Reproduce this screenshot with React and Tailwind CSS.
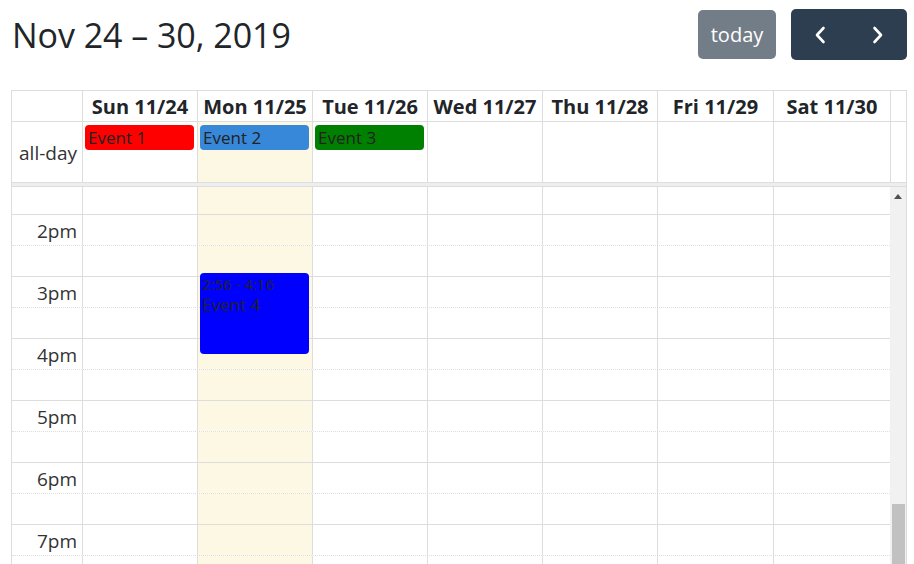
import React from 'react'

const DAYS = ['Sun 11/24', 'Mon 11/25', 'Tue 11/26', 'Wed 11/27', 'Thu 11/28', 'Fri 11/29', 'Sat 11/30']
const COLS = 'grid grid-cols-[70px_115px_115px_115px_115px_115px_116px_117px_16px]'
const BODY_COLS = 'grid grid-cols-[70px_115px_115px_115px_115px_115px_116px_117px]'

const SLOTS = [
  { label: '', hour: false },
  { label: '2pm', hour: true },
  { label: '', hour: false },
  { label: '3pm', hour: true },
  { label: '', hour: false },
  { label: '4pm', hour: true },
  { label: '', hour: false },
  { label: '5pm', hour: true },
  { label: '', hour: false },
  { label: '6pm', hour: true },
  { label: '', hour: false },
  { label: '7pm', hour: true },
  { label: '', hour: false },
]

const ALLDAY = [
  { day: 0, title: 'Event 1', color: 'bg-[#ff0000]' },
  { day: 1, title: 'Event 2', color: 'bg-[#3788d8]' },
  { day: 2, title: 'Event 3', color: 'bg-[#008000]' },
]

function Chevron({ dir }) {
  return (
    <svg width="14" height="20" viewBox="0 0 14 20" fill="none">
      <path
        d={dir === 'left' ? 'M10.5 3 L4 10 L10.5 17' : 'M3.5 3 L10 10 L3.5 17'}
        stroke="white"
        strokeWidth="2.6"
        strokeLinecap="round"
        strokeLinejoin="round"
      />
    </svg>
  )
}

export default function App() {
  return (
    <div className="h-screen overflow-hidden bg-white text-[#212529] font-['Open_Sans','Noto_Sans',sans-serif] flex flex-col">
      {/* toolbar */}
      <div className="flex items-center justify-between pl-[12px] pr-[7px] pt-[9px] mb-[30px]">
        <h2 className="text-[34px] leading-[51px] h-[51px] tracking-[-0.05px] pt-[1px]">Nov 24 – 30, 2019</h2>
        <div className="flex items-center gap-[15px]">
          <button className="w-[78px] h-[49px] rounded-[5px] bg-[#737d88] text-white text-[20px] leading-none">today</button>
          <div className="flex h-[51px] rounded-[5px] bg-[#2c3e50] overflow-hidden">
            <button className="w-[58px] flex items-center justify-center">
              <Chevron dir="left" />
            </button>
            <button className="w-[58px] flex items-center justify-center">
              <Chevron dir="right" />
            </button>
          </div>
        </div>
      </div>

      {/* calendar */}
      <div className="ml-[11px] w-[896px] border border-b-0 border-[#ddd] flex-1 flex flex-col min-h-0">
        {/* day header */}
        <div className={`${COLS} h-[31px] border-b border-[#ddd]`}>
          <div />
          {DAYS.map((d) => (
            <div key={d} className="border-l border-[#ddd] flex items-center justify-center font-bold text-[20px] pt-[1px]">
              {d}
            </div>
          ))}
          <div className="border-l border-[#ddd]" />
        </div>

        {/* all-day row */}
        <div className={`${COLS} h-[60px]`}>
          <div className="flex items-center justify-end pr-[5px] text-[19px] pt-[3px] text-[#333]">all-day</div>
          {DAYS.map((d, i) => {
            const ev = ALLDAY.find((e) => e.day === i)
            return (
              <div key={d} className={`border-l border-[#ddd] pt-[3px] pl-[2px] pr-[3px] ${i === 1 ? 'bg-[#fcf8e3]' : ''}`}>
                {ev && (
                  <div className={`${ev.color} h-[25px] rounded-[4px] pl-[3px] text-[17px] leading-[25px] text-[#222]`}>
                    {ev.title}
                  </div>
                )}
              </div>
            )
          })}
          <div className="border-l border-[#ddd]" />
        </div>

        {/* divider */}
        <div className="h-[5px] border-y border-[#ddd] bg-[#eee]" />

        {/* time grid */}
        <div className="flex-1 flex min-h-0">
          <div className="relative w-[878px] overflow-hidden">
            <div className="-mt-[4px]">
              {SLOTS.map((s, idx) => (
                <div
                  key={idx}
                  className={`${BODY_COLS} h-[31px] border-t border-[#ddd] ${s.hour ? 'border-solid' : 'border-dotted'}`}
                >
                  <div className="flex items-center justify-end pr-[5px] text-[19px] leading-none pt-[3px] text-[#333]">{s.label}</div>
                  {DAYS.map((d, i) => (
                    <div key={d} className={`border-l border-[#ddd] ${i === 1 ? 'bg-[#fcf8e3]' : ''}`} />
                  ))}
                </div>
              ))}
            </div>

            {/* Event 4 */}
            <div className="absolute left-[188px] top-[86px] w-[109px] h-[81px] rounded-[4px] bg-[#0000ff] text-[#222] px-[2px] pt-[1px]">
              <div className="text-[15px] leading-[20px]">2:56 - 4:16</div>
              <div className="text-[17px] leading-[22px]">Event 4</div>
            </div>
          </div>

          {/* scrollbar */}
          <div className="w-[16px] bg-[#f1f1f1] flex flex-col items-center">
            <div className="h-[17px] flex items-center justify-center pt-[1px]">
              <svg width="8" height="5" viewBox="0 0 8 5">
                <path d="M0 5 L4 0 L8 5 Z" fill="#505050" />
              </svg>
            </div>
            <div className="flex-1" />
            <div className="w-[13px] h-[60px] bg-[#c1c1c1] -mr-[1px]" />
          </div>
        </div>
      </div>
    </div>
  )
}
